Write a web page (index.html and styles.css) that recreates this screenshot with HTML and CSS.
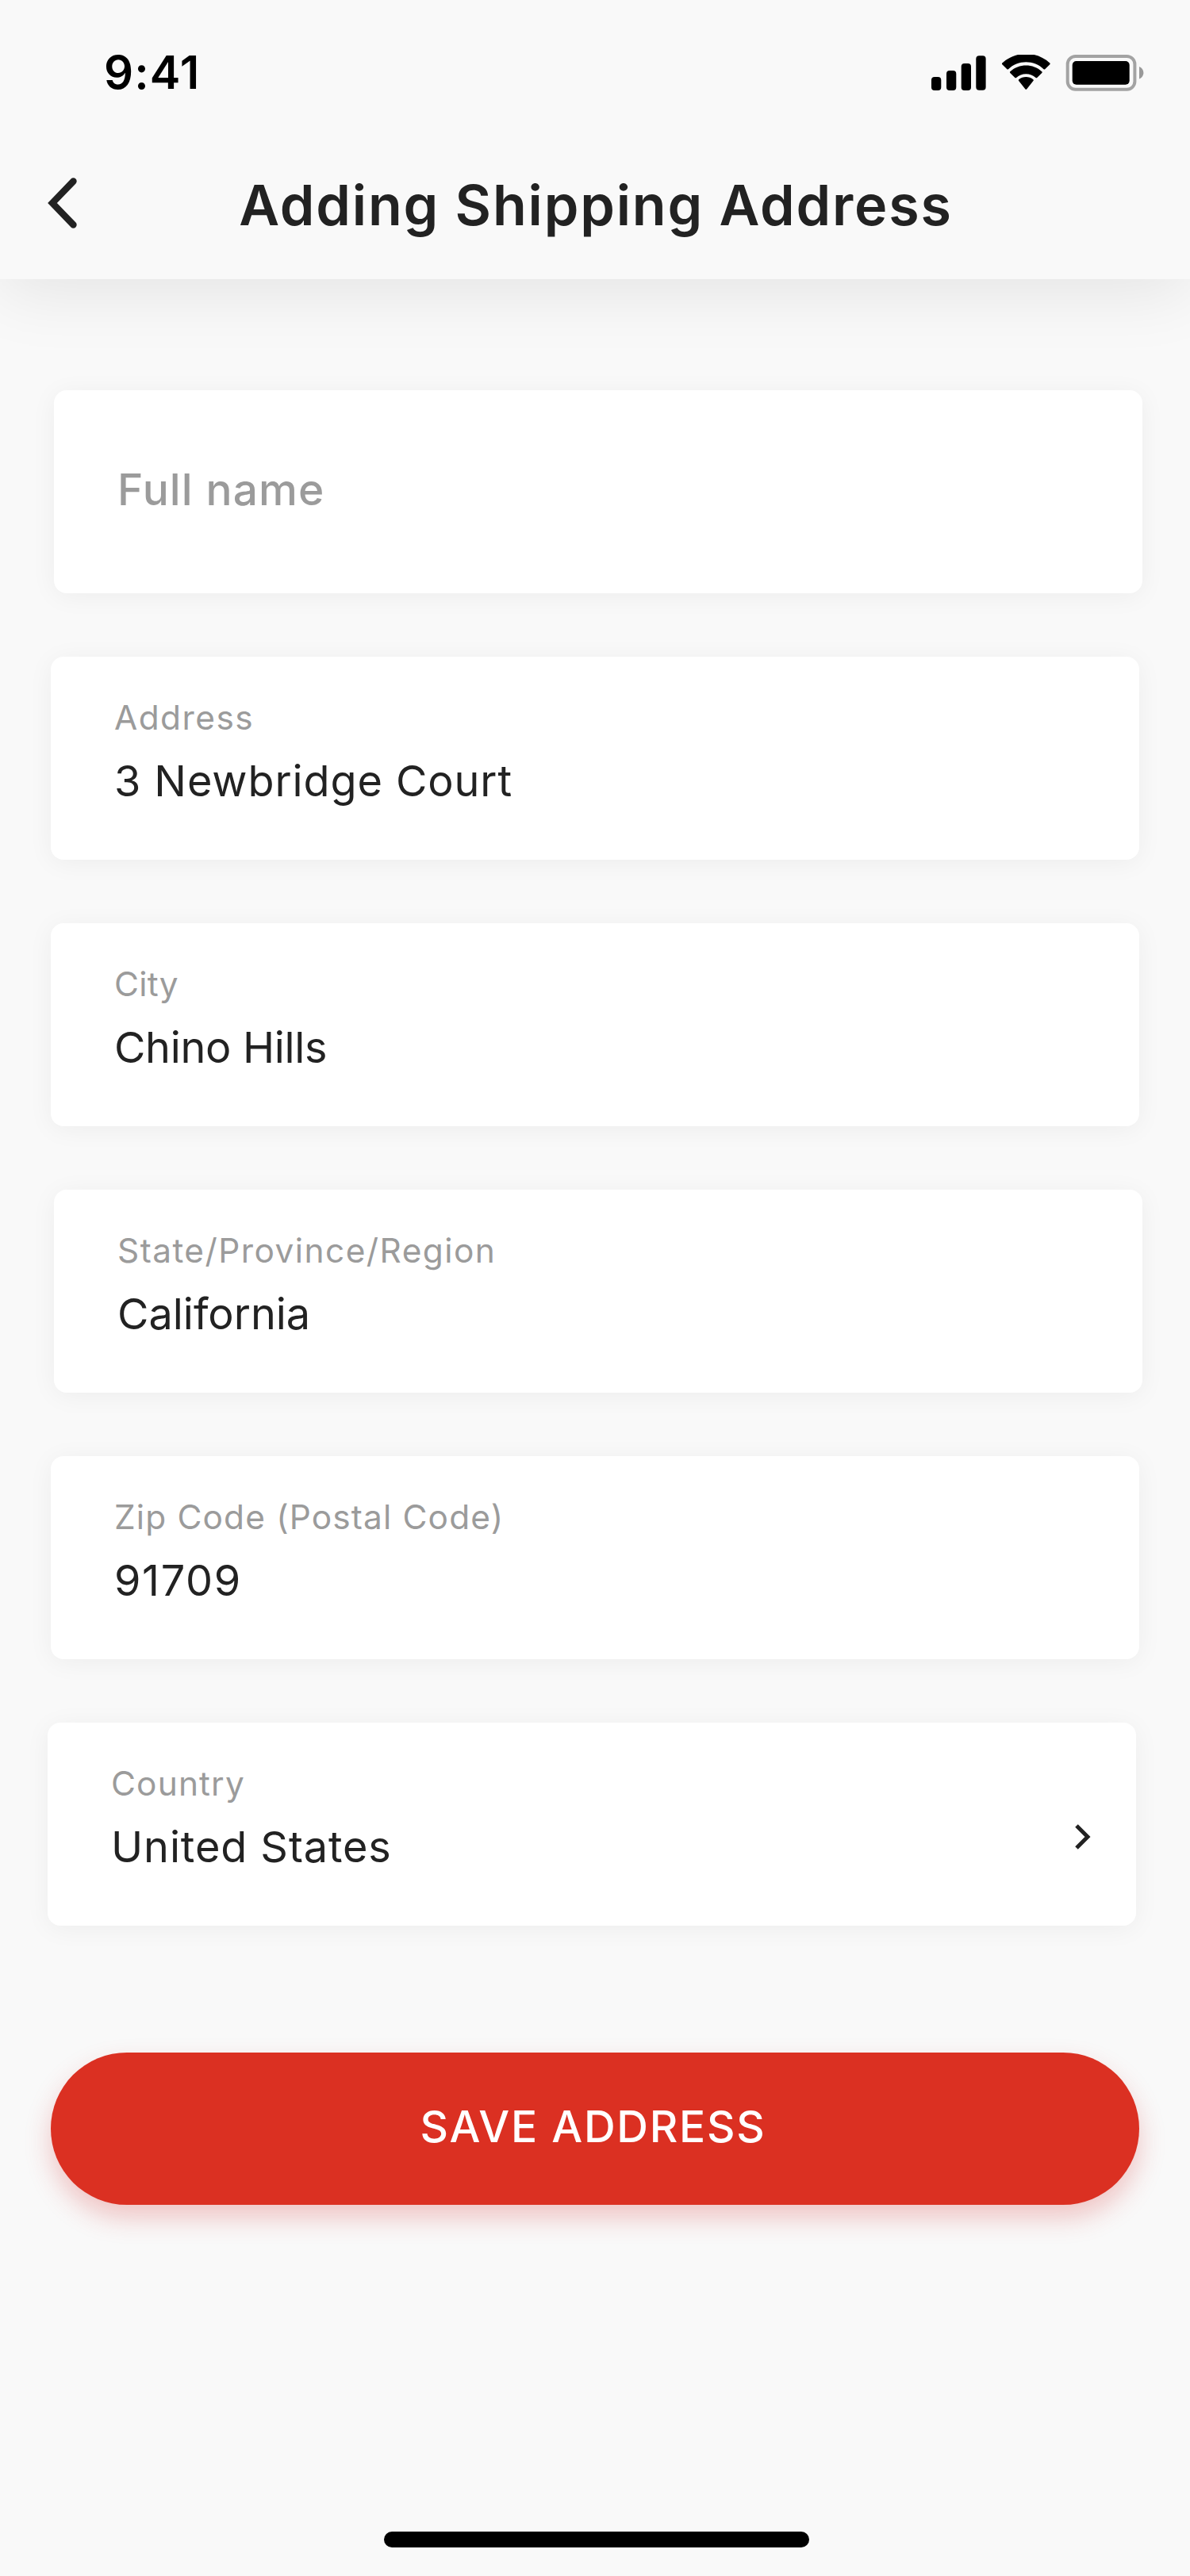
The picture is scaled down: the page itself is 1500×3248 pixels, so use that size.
FILE: index.html
```html
<!DOCTYPE html>
<html lang="en">
<head>
<meta charset="utf-8">
<title>Adding Shipping Address</title>
<link rel="stylesheet" href="styles.css">
</head>
<body>
<div class="screen">
  <header class="header">
    <div class="status">
      <span class="time">9:41</span>
      <svg class="status-icons" width="268" height="46" viewBox="0 0 268 46">
        <rect x="0" y="28" width="12.3" height="17" rx="4"/>
        <rect x="19" y="20" width="12.3" height="25" rx="4"/>
        <rect x="37.7" y="11" width="12.3" height="34" rx="4"/>
        <rect x="56.3" y="1.3" width="12.3" height="43.4" rx="4"/>
        <path d="M119.3 9.3c8.3 0 16.3 3.2 22.3 8.9.5.4 1.2.4 1.6 0l6.1-6c.5-.5.5-1.3 0-1.7-16.8-15.6-43.2-15.6-60 0-.5.4-.5 1.2 0 1.7l6.1 6c.4.4 1.1.4 1.6 0 6-5.7 14-8.9 22.3-8.9zm0 14.9c4.6 0 9 1.7 12.3 4.7.5.4 1.2.4 1.6 0l6.1-6c.5-.5.5-1.3 0-1.7-11.3-10.3-28.7-10.3-40 0-.5.4-.5 1.2 0 1.7l6.1 6c.4.4 1.1.4 1.6 0 3.3-3 7.7-4.7 12.3-4.7zm9.1 8.8c.5-.5.5-1.2 0-1.7-5.2-4.4-13-4.4-18.2 0-.5.4-.5 1.2 0 1.7l8.3 10.4c.4.5 1.2.5 1.6 0z"/>
        <rect x="171.7" y="2" width="84.7" height="41.8" rx="10" fill="none" stroke="#a3a3a3" stroke-width="4"/>
        <rect x="177.7" y="8" width="72" height="29.7" rx="5"/>
        <path d="M262 15v15.5c3.3-1.3 5.4-4.4 5.4-7.8s-2.1-6.4-5.4-7.7z" fill="#999"/>
      </svg>
    </div>
    <div class="nav">
      <svg class="back" width="40" height="64" viewBox="0 0 40 64" fill="none" stroke="#222" stroke-width="8.4" stroke-linecap="round"><path d="M34.5 4.5L8 32L34.5 59.5"/></svg>
      <h1 class="title">Adding Shipping Address</h1>
    </div>
  </header>
  <main class="form">
    <div class="field inset"><span class="placeholder">Full name</span></div>
    <div class="field"><span class="label wider">Address</span><span class="value wide">3 Newbridge Court</span></div>
    <div class="field"><span class="label">City</span><span class="value tight">Chino Hills</span></div>
    <div class="field inset"><span class="label wider">State/Province/Region</span><span class="value">California</span></div>
    <div class="field"><span class="label wide">Zip Code (Postal Code)</span><span class="value wider">91709</span></div>
    <div class="field outset select">
      <div class="text"><span class="label wide">Country</span><span class="value wide">United States</span></div>
      <svg class="chevron" width="22" height="34" viewBox="0 0 22 34" fill="none" stroke="#222" stroke-width="5"><path d="M3 3L17 17L3 31"/></svg>
    </div>
    <button class="save" type="button">SAVE ADDRESS</button>
  </main>
  <div class="home"></div>
</div>
</body>
</html>
```
FILE: styles.css
```css
* { box-sizing: border-box; }
body { margin: 0; background: #f9f9f9; color: #222; font-family: Inter, sans-serif; }
.screen { width: 1500px; height: 3248px; display: flex; flex-direction: column; overflow: hidden; }
.header { height: 352px; background: #f9f9f9; box-shadow: 0 16px 80px rgba(0, 0, 0, .085); }
.status { height: 176px; display: flex; justify-content: space-between; align-items: flex-start; padding: 55px 58px 0 131px; }
.time { font-size: 58px; line-height: 72px; font-weight: 600; letter-spacing: 1.1px; color: #000; }
.status-icons { margin-top: 14px; }
.nav { height: 176px; display: grid; grid-template-columns: 100px 1fr 100px; }
.back { margin: 48px 0 0 58px; }
.title { margin: 0; padding-left: 2px; font-size: 70px; line-height: 166px; font-weight: 600; letter-spacing: 1.8px; text-align: center; white-space: nowrap; }
.form { display: flex; flex-direction: column; gap: 80px; padding: 140px 64px 0; }
.field { width: 1372px; height: 256px; padding: 49px 80px 0; border-radius: 16px; background: #fff; box-shadow: 0 4px 32px rgba(0, 0, 0, .05); display: flex; flex-direction: column; gap: 16px; align-items: flex-start; }
.inset { margin-left: 4px; }
.outset { margin-left: -4px; }
.select { flex-direction: row; justify-content: space-between; padding-right: 56px; }
.text { display: flex; flex-direction: column; gap: 16px; }
.chevron { margin-top: 78px; }
.label { font-size: 42.4px; line-height: 56px; letter-spacing: .3px; color: #9b9b9b; }
.value { font-size: 54px; line-height: 72px; }
.label.wide { letter-spacing: 1.15px; }
.label.wider { letter-spacing: 1.45px; }
.value.tight { letter-spacing: -.33px; }
.value.wide { letter-spacing: .9px; }
.value.wider { letter-spacing: 1.6px; }
.placeholder { font-size: 55px; line-height: 72px; font-weight: 500; letter-spacing: 1.1px; color: #9b9b9b; margin-top: 40px; }
.save { height: 192px; margin-top: 80px; padding: 0 5px 7px 0; border: 0; border-radius: 96px; background: #db3022; color: #fff; font: 500 55px/72px Inter, sans-serif; letter-spacing: 1.7px; box-shadow: 0 16px 32px rgba(211, 38, 38, .25); }
.home { width: 536px; height: 20px; margin: auto 0 36px 484px; border-radius: 10px; background: #000; }
```
